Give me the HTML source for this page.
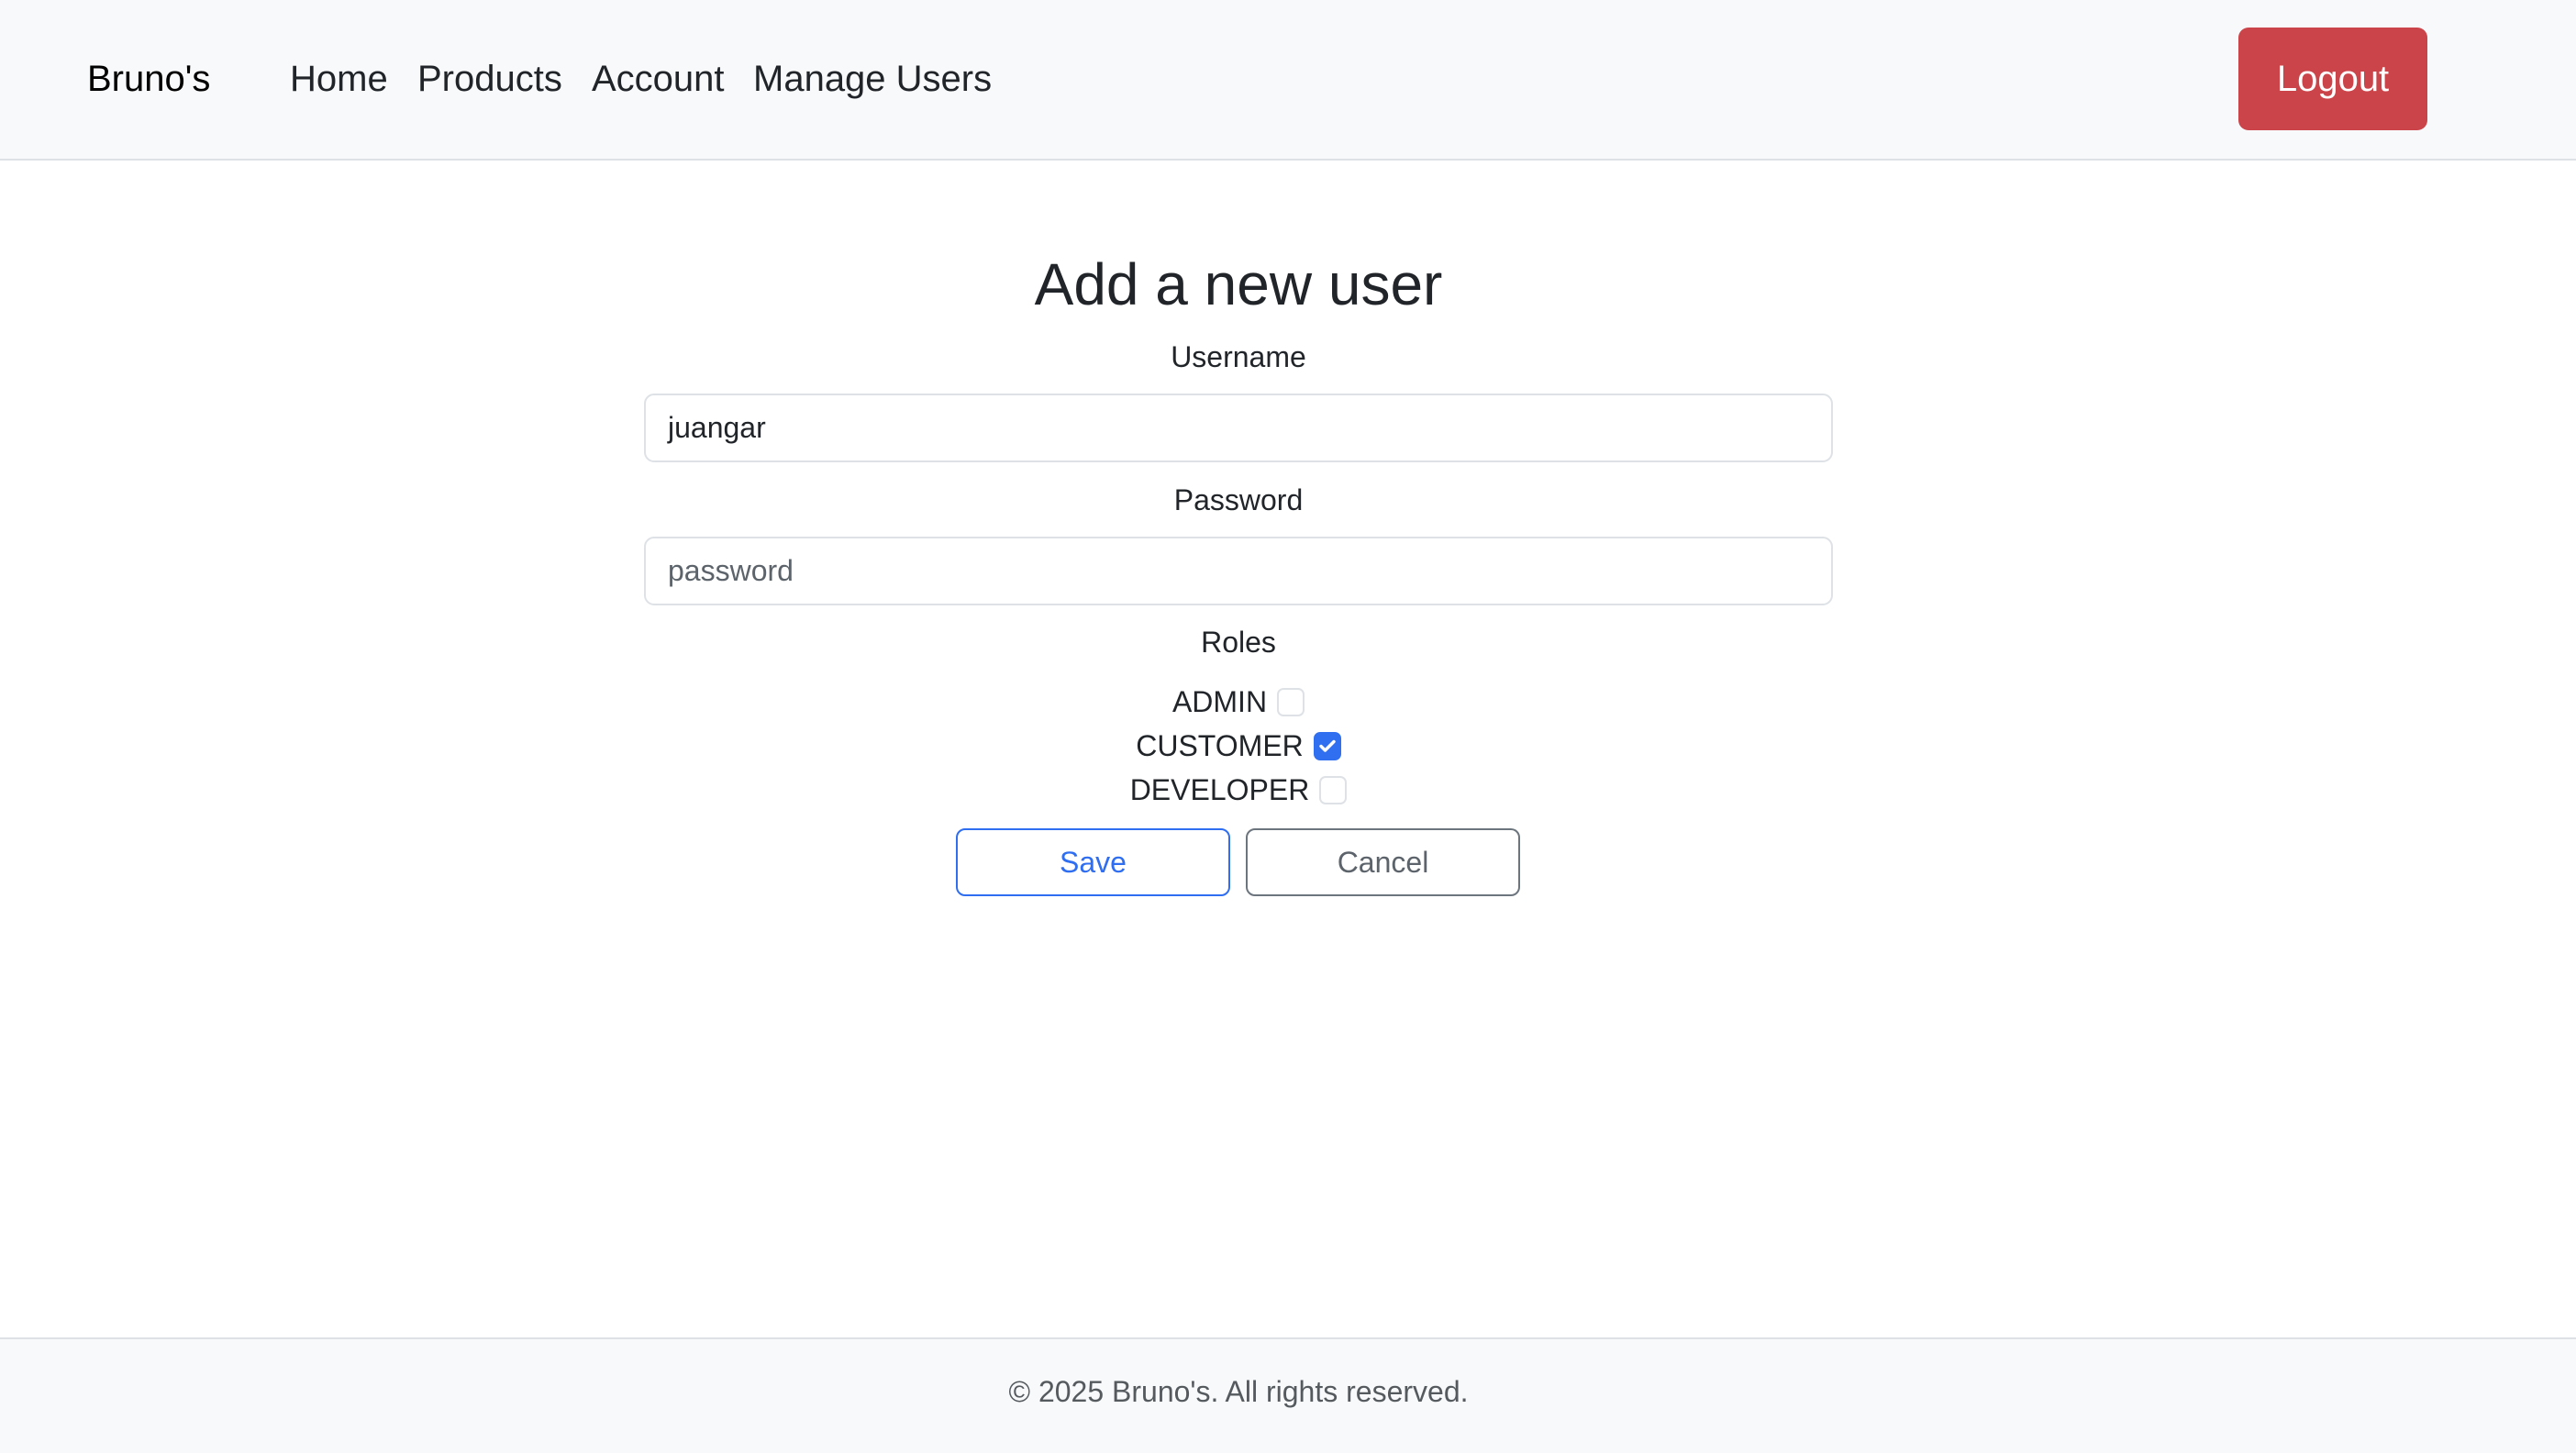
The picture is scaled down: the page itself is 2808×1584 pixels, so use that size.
<!DOCTYPE html>
<html><head><meta charset="utf-8"><style>
*{margin:0;padding:0;box-sizing:border-box}
html,body{width:2808px;height:1584px;overflow:hidden;background:#fff;font-family:"Liberation Sans",Arial,sans-serif;color:#212529}
.abs{position:absolute}
.nav{left:0;top:0;width:2808px;height:175px;background:#f8f9fa;border-bottom:2px solid #dee2e6}
.nl{top:60px;font-size:40px;line-height:52px;color:#212529}
.logout{left:2440px;top:30px;width:206px;height:112px;background:#cb444a;border-radius:11px;color:#fff;font-size:40px;line-height:112px;text-align:center}
.c{left:0;width:2700px;text-align:center}
.inp{left:702px;width:1296px;height:75px;border:2px solid #dee2e6;border-radius:11px;font-size:32px;line-height:71px;padding-left:24px}
.row{left:0;width:2700px;display:flex;justify-content:center;align-items:center;gap:11px;font-size:32px;height:34px}
.cb{width:30px;height:31px;border:2px solid #dee2e6;border-radius:7px;background:#fff}
.cb.on{background:#3070f0;border-color:#3070f0;display:flex;align-items:center;justify-content:center}
.btn{top:903px;width:299px;height:74px;border-radius:10px;font-size:32px;line-height:70px;text-align:center}
.foot{left:0;top:1458px;width:2808px;height:126px;background:#f8f9fa;border-top:2px solid #dee2e6}
</style></head><body>
<div class="abs nav"></div>
<div class="abs nl" style="left:95px;color:#000">Bruno's</div>
<div class="abs nl" style="left:316px">Home</div>
<div class="abs nl" style="left:455px">Products</div>
<div class="abs nl" style="left:645px">Account</div>
<div class="abs nl" style="left:821px">Manage Users</div>
<div class="abs logout">Logout</div>

<div class="abs c" style="top:270px;font-size:64px;line-height:80px">Add a new user</div>
<div class="abs c" style="top:369px;font-size:32px;line-height:40px">Username</div>
<div class="abs inp" style="top:429px;color:#212529">juangar</div>
<div class="abs c" style="top:525px;font-size:32px;line-height:40px">Password</div>
<div class="abs inp" style="top:585px;color:#5c636a">password</div>
<div class="abs c" style="top:680px;font-size:32px;line-height:40px">Roles</div>

<div class="abs row" style="top:748px"><span>ADMIN</span><div class="cb"></div></div>
<div class="abs row" style="top:796px"><span>CUSTOMER</span><div class="cb on"><svg width="20" height="16" viewBox="0 0 20 16"><path d="M3 8.5l4.5 4.5L17 3.5" stroke="#fff" stroke-width="3.4" fill="none" stroke-linecap="round" stroke-linejoin="round"/></svg></div></div>
<div class="abs row" style="top:844px"><span>DEVELOPER</span><div class="cb"></div></div>

<div class="abs btn" style="left:1042px;border:2px solid #2f6ef0;color:#2f6ef0">Save</div>
<div class="abs btn" style="left:1358px;border:2px solid #6c757d;color:#5c636a">Cancel</div>

<div class="abs foot"></div>
<div class="abs c" style="top:1497px;font-size:32px;line-height:40px;color:#555a5f">© 2025 Bruno's. All rights reserved.</div>
</body></html>
